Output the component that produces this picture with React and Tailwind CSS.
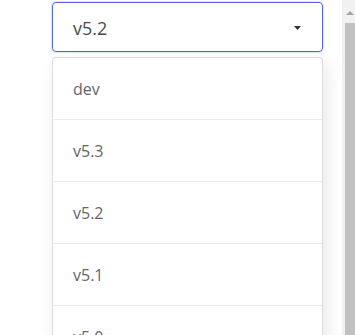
import React from 'react';

const VERSIONS = ["dev", "v5.3", "v5.2", "v5.1", "v5.0", "v4.9"];

const VersionSelect = ({ value }) => (
    <div className="flex h-[50px] w-[271px] items-center justify-between rounded-[4px] border border-[#5467d6] pl-5 pr-[21px] shadow-[0_0_0_1px_rgba(84,103,214,0.18)]">
        <span className="mt-[2px] text-[18px] text-[#4a4a4a]">{value}</span>
        <svg width="7" height="4" viewBox="0 0 7 4" className="mt-[1px]">
            <path d="M0 0h7L3.5 4z" fill="#333" />
        </svg>
    </div>
);

const Menu = ({ items }) => (
    <div className="mt-[5px] w-[271px] rounded-t-[4px] border border-b-0 border-[#dedede] bg-white shadow-[4px_6px_18px_rgba(0,0,0,0.09)]">
        {items.map(item => (
            <div key={item} className="flex h-[62px] items-center border-b border-[#ebebeb] pl-5 text-[16px] text-[#666]">
                {item}
            </div>
        ))}
    </div>
);

const Scrollbar = () => (
    <div className="flex h-full w-[13px] flex-col bg-[#f1f1f1]">
        <div className="flex h-[23px] items-start justify-end pt-[11px] pr-[1px]">
            <svg width="8" height="4" viewBox="0 0 8 4">
                <path d="M0 4h8L4 0z" fill="#a3a3a3" />
            </svg>
        </div>
        <div className="ml-[3px] flex-1 bg-[#c1c1c1]" />
    </div>
);

export default function App() {
    return (
        <div className="flex h-[335px] w-[355px] overflow-hidden bg-white" style={{ fontFamily: '"Open Sans", "Noto Sans", sans-serif' }}>
            <div className="flex-1 pl-[52px] pt-[2px]">
                <VersionSelect value="v5.2" />
                <Menu items={VERSIONS} />
            </div>
            <Scrollbar />
        </div>
    );
}
